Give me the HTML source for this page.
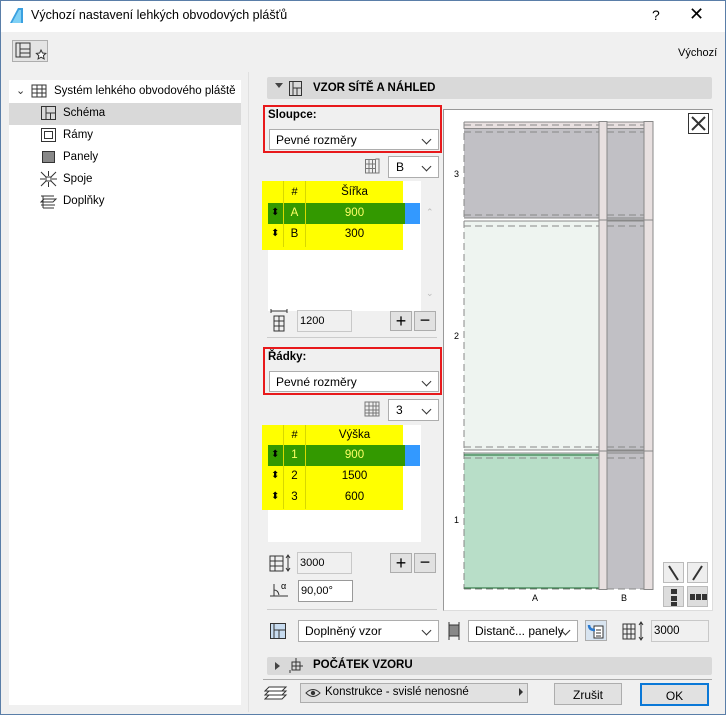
<!DOCTYPE html>
<html><head><meta charset="utf-8"><style>
*{box-sizing:border-box;margin:0;padding:0}
body{width:726px;height:715px;position:relative;overflow:hidden;background:#f0f0f0;font-family:"Liberation Sans","DejaVu Sans",sans-serif;font-size:12px;color:#000}
.a{position:absolute}
.win{position:absolute;left:0;top:0;width:726px;height:715px;border:1px solid #5a7ea8}
.sel{background:#fff;border:1px solid #adadad;height:24px;font-size:12px;padding:4px 6px}
.sel:after{content:"";position:absolute;right:8px;top:6px;width:6px;height:6px;border-right:1px solid #333;border-bottom:1px solid #333;transform:rotate(45deg)}
.inp{background:#fff;border:1px solid #c8c8c8;font-size:11px;padding:4px 2px}
.btn{background:#e1e1e1;border:1px solid #adadad;text-align:center}
.c{text-align:center}
</style></head><body>
<div class="win"></div>
<div class="a" style="left:1px;top:1px;width:724px;height:31px;background:#fff"></div>
<svg class="a" style="left:9px;top:7px" width="15" height="17"><path d="M1 16 L9 1 L14 1 L14 16 Z" fill="#3aa0e0"/><path d="M3 16 L10 3 L12 3 L12 16Z" fill="#7fd0f5"/></svg>
<div class="a" style="left:31px;top:8px;font-size:12.5px">Výchozí nastavení lehkých obvodových plášťů</div>
<div class="a" style="left:652px;top:7px;font-size:14px">?</div>
<div class="a" style="left:689px;top:4px;font-size:18px">✕</div>
<div class="a btn" style="left:12px;top:40px;width:36px;height:22px;background:#e4e4e4"></div>
<svg class="a" style="left:14px;top:41px" width="34" height="20"><rect x="2" y="2" width="14" height="14" fill="none" stroke="#333"/><path d="M6 2V16M6 8H16M6 12H16" stroke="#333" fill="none"/><path d="M27 9l1.5 3 3.3.4-2.4 2.2.7 3.3-3-1.7-3 1.7.7-3.3-2.4-2.2 3.3-.4z" fill="#fff" stroke="#333"/><path d="M36 8l3 3-3 3z" fill="#333"/></svg>
<div class="a" style="left:678px;top:47px;font-size:11px">Výchozí</div>
<div class="a" style="left:9px;top:80px;width:232px;height:625px;background:#fff"></div>
<div class="a" style="left:9px;top:103px;width:232px;height:22px;background:#d9d9d9"></div>
<div class="a" style="left:16px;top:84px;font-size:11px;color:#333">⌄</div>
<svg class="a" style="left:30px;top:83px" width="18" height="16"><path d="M2 2H16V14H2Z M2 6H16M2 10H16M7 2V14M12 2V14" stroke="#333" fill="none"/></svg>
<div class="a" style="left:54px;top:85px;font-size:11.5px">Systém lehkého obvodového pláště</div>
<svg class="a" style="left:40px;top:105px" width="18" height="16"><rect x="1.5" y="1.5" width="14" height="13" fill="none" stroke="#333"/><path d="M6 1.5V14.5M6 8H15.5M10.5 8V14.5" stroke="#333"/></svg>
<div class="a" style="left:63px;top:107px;font-size:11.5px">Schéma</div>
<svg class="a" style="left:40px;top:127px" width="18" height="16"><rect x="1.5" y="1.5" width="14" height="13" fill="none" stroke="#333"/><rect x="4.5" y="4.5" width="8" height="7" fill="none" stroke="#333"/></svg>
<div class="a" style="left:63px;top:129px;font-size:11.5px">Rámy</div>
<svg class="a" style="left:40px;top:149px" width="18" height="16"><rect x="2.5" y="2.5" width="12" height="11" fill="#888" stroke="#333"/></svg>
<div class="a" style="left:63px;top:151px;font-size:11.5px">Panely</div>
<svg class="a" style="left:40px;top:171px" width="18" height="16"><path d="M1 1L7 7M16 1L10 7M1 15L7 9M16 15L10 9M8.5 0V5M8.5 11V16M0 8H5M12 8H17" stroke="#333"/><rect x="6" y="6" width="5" height="4" fill="#fff" stroke="#333"/></svg>
<div class="a" style="left:63px;top:173px;font-size:11.5px">Spoje</div>
<svg class="a" style="left:40px;top:193px" width="18" height="16"><path d="M1 3H14M4 6H16L13 9H1ZM1 12H15M3 15H14M3 3V15" stroke="#333" fill="none"/></svg>
<div class="a" style="left:63px;top:195px;font-size:11.5px">Doplňky</div>
<div class="a" style="left:248px;top:72px;width:1px;height:640px;background:#e0e0e0"></div>
<div class="a" style="left:267px;top:77px;width:445px;height:22px;background:#d9d9d9;border-radius:2px"></div>
<div class="a" style="left:275px;top:83px;width:0;height:0;border-left:4px solid transparent;border-right:4px solid transparent;border-top:5px solid #444"></div>
<svg class="a" style="left:288px;top:80px" width="16" height="17"><rect x="1.5" y="1.5" width="12" height="14" fill="none" stroke="#333"/><path d="M5 1.5V15.5M5 8H13.5M9 8V15.5" stroke="#333"/></svg>
<div class="a" style="left:313px;top:82px;font-weight:bold;font-size:11.5px">VZOR SÍTĚ A NÁHLED</div>
<div class="a" style="left:263px;top:105px;width:179px;height:48px;border:2px solid #e8191b"></div>
<div class="a" style="left:268px;top:109px;font-weight:bold;font-size:11.5px">Sloupce:</div>
<div class="a sel" style="left:269px;top:129px;width:170px;height:21px;padding:3px 6px">Pevné rozměry</div>
<svg class="a" style="left:364px;top:158px" width="16" height="16"><path d="M1 1.5H11M1 6H11M1 10.5H11M1 15H11M1.5 1V15M5 1V15M8.5 1V15M11.5 1V15H15V1H11.5" stroke="#777" fill="none"/></svg>
<div class="a sel" style="left:388px;top:156px;width:51px;height:22px;padding:3px 7px">B</div>
<div class="a" style="left:268px;top:181px;width:153px;height:130px;background:#fff"></div>
<div class="a" style="left:262px;top:181px;width:141px;height:69px;background:#ffff00"></div>
<div class="a" style="left:268px;top:203px;width:137px;height:21px;background:#339900"></div>
<div class="a" style="left:405px;top:203px;width:15px;height:21px;background:#3399ff"></div>
<div class="a" style="left:283px;top:181px;width:1px;height:66px;background:#d8d800"></div>
<div class="a" style="left:305px;top:181px;width:1px;height:66px;background:#d8d800"></div>
<div class="a c" style="left:284px;top:186px;width:21px;font-size:11px">#</div>
<div class="a c" style="left:306px;top:186px;width:97px;font-size:11.5px">Šířka</div>
<div class="a" style="left:271px;top:207px;font-size:10px">⬍</div>
<div class="a c" style="left:284px;top:207px;width:21px;color:#ffff66;font-size:11.5px">A</div>
<div class="a c" style="left:306px;top:207px;width:97px;color:#ffff66;font-size:11.5px">900</div>
<div class="a" style="left:271px;top:228px;font-size:10px">⬍</div>
<div class="a c" style="left:284px;top:228px;width:21px;font-size:11.5px">B</div>
<div class="a c" style="left:306px;top:228px;width:97px;font-size:11.5px">300</div>
<div class="a" style="left:426px;top:207px;font-size:9px;color:#bbb">⌃</div>
<div class="a" style="left:426px;top:288px;font-size:9px;color:#bbb">⌄</div>
<svg class="a" style="left:270px;top:308px" width="18" height="24"><path d="M1 3H17M1 1V5M17 1V5M4 8H14V23H4ZM4 13H14M4 18H14M9 8V23" stroke="#333" fill="none"/></svg>
<div class="a inp" style="left:297px;top:310px;width:55px;height:22px;background:#f0f0f0">1200</div>
<div class="a btn" style="left:390px;top:311px;width:22px;height:20px;font-size:18px;line-height:18px">+</div>
<div class="a btn" style="left:414px;top:311px;width:22px;height:20px;font-size:18px;line-height:16px">−</div>
<div class="a" style="left:267px;top:337px;width:170px;height:1px;background:#ccc"></div>
<div class="a" style="left:263px;top:347px;width:179px;height:48px;border:2px solid #e8191b"></div>
<div class="a" style="left:268px;top:351px;font-weight:bold;font-size:11.5px">Řádky:</div>
<div class="a sel" style="left:269px;top:371px;width:170px;height:21px;padding:3px 6px">Pevné rozměry</div>
<svg class="a" style="left:364px;top:401px" width="16" height="16"><path d="M1 1H15V15H1ZM1 5H15M1 9H15M1 12H15M5 1V15M9 1V15M12 1V15" stroke="#777" fill="none"/></svg>
<div class="a sel" style="left:388px;top:399px;width:51px;height:22px;padding:3px 7px">3</div>
<div class="a" style="left:268px;top:425px;width:153px;height:117px;background:#fff"></div>
<div class="a" style="left:262px;top:425px;width:141px;height:85px;background:#ffff00"></div>
<div class="a" style="left:268px;top:445px;width:137px;height:21px;background:#339900"></div>
<div class="a" style="left:405px;top:445px;width:15px;height:21px;background:#3399ff"></div>
<div class="a" style="left:283px;top:425px;width:1px;height:84px;background:#d8d800"></div>
<div class="a" style="left:305px;top:425px;width:1px;height:84px;background:#d8d800"></div>
<div class="a c" style="left:284px;top:429px;width:21px;font-size:11px">#</div>
<div class="a c" style="left:306px;top:429px;width:97px;font-size:11.5px">Výška</div>
<div class="a" style="left:271px;top:449px;font-size:10px">⬍</div>
<div class="a c" style="left:284px;top:449px;width:21px;color:#ffff66;font-size:11.5px">1</div>
<div class="a c" style="left:306px;top:449px;width:97px;color:#ffff66;font-size:11.5px">900</div>
<div class="a" style="left:271px;top:470px;font-size:10px">⬍</div>
<div class="a c" style="left:284px;top:470px;width:21px;font-size:11.5px">2</div>
<div class="a c" style="left:306px;top:470px;width:97px;font-size:11.5px">1500</div>
<div class="a" style="left:271px;top:491px;font-size:10px">⬍</div>
<div class="a c" style="left:284px;top:491px;width:21px;font-size:11.5px">3</div>
<div class="a c" style="left:306px;top:491px;width:97px;font-size:11.5px">600</div>
<svg class="a" style="left:269px;top:554px" width="24" height="18"><path d="M1 2H14V17H1ZM1 7H14M1 12H14M6 2V17M19 2V16M17 4L19 1L21 4M17 14L19 17L21 14" stroke="#333" fill="none"/></svg>
<div class="a inp" style="left:297px;top:552px;width:55px;height:22px;background:#f0f0f0">3000</div>
<div class="a btn" style="left:390px;top:553px;width:22px;height:20px;font-size:18px;line-height:18px">+</div>
<div class="a btn" style="left:414px;top:553px;width:22px;height:20px;font-size:18px;line-height:16px">−</div>
<svg class="a" style="left:268px;top:580px" width="24" height="18"><path d="M2 16H20M6 16V4M6 10Q10 10 11 15" stroke="#333" fill="none"/><text x="13" y="9" font-size="9" font-family="Liberation Sans">α</text></svg>
<div class="a inp" style="left:298px;top:580px;width:55px;height:22px;border-color:#999">90,00°</div>
<div class="a" style="left:267px;top:609px;width:170px;height:1px;background:#ccc"></div>
<div class="a" style="left:443px;top:109px;width:270px;height:502px;background:#fff;border:1px solid #999;border-right-color:#ddd;border-bottom-color:#ddd"></div>
<svg class="a" style="left:444px;top:110px" width="268" height="500">
<g font-family="Liberation Sans" font-size="9">
<text x="10" y="67">3</text><text x="10" y="229">2</text><text x="10" y="413">1</text>
<text x="88" y="491">A</text><text x="177" y="491">B</text></g>
<rect x="20" y="12" width="135" height="96" fill="#c1c0c5"/>
<rect x="20" y="111" width="135" height="229" fill="#eef4f0"/>
<rect x="20" y="343" width="135" height="135" fill="#b8dec8"/>
<rect x="163" y="12" width="37" height="467" fill="#c1c0c5"/>
<rect x="20" y="12" width="180" height="7" fill="#e8e0e0"/>
<path d="M20 12H200M20 18.5H200M20 108H200M20 111H200M20 340H200M20 343H200" stroke="#888" fill="none"/>
<path d="M20 15H200M20 22H200M20 105H200M20 116H200M20 337H200M20 348H200M20 479H200M20 12V479" stroke="#888" stroke-dasharray="7,4" fill="none"/>
<path d="M20 345H155M20 478H155" stroke="#1a6a30"/>
<rect x="155" y="11.5" width="8" height="468" fill="#e8e0e0" stroke="#888"/>
<rect x="200" y="11.5" width="9" height="468" fill="#e8e0e0" stroke="#888"/>
<path d="M155 110H209M155 341H209" stroke="#888"/>
<rect x="244.5" y="3.5" width="20" height="20" fill="#fff" stroke="#333"/>
<path d="M248 7L261 20M261 7L248 20" stroke="#333" stroke-width="2"/>
<g stroke="#bbb"><rect x="219.5" y="452.5" width="20" height="20" fill="#eee"/><rect x="243.5" y="452.5" width="20" height="20" fill="#eee"/><rect x="219.5" y="476.5" width="20" height="20" fill="#ddd"/><rect x="243.5" y="476.5" width="20" height="20" fill="#ddd"/></g>
<path d="M225 456L234 470M258 456L249 470" stroke="#333" stroke-width="2"/>
<path d="M227 479h6v5h-6zM227 486h6v5h-6zM227 492h6v4h-6zM246 484h5v6h-5zM252 484h5v6h-5zM258 484h5v6h-5z" fill="#333"/>
</svg>
<svg class="a" style="left:268px;top:621px" width="20" height="20"><rect x="2.5" y="2.5" width="15" height="15" fill="#c8dcf0" stroke="#333"/><path d="M6 2.5V17.5M6 9H17.5M11 9V17.5" stroke="#333"/></svg>
<div class="a sel" style="left:298px;top:620px;width:141px;height:22px;padding:3px 6px">Doplněný vzor</div>
<svg class="a" style="left:446px;top:621px" width="16" height="20"><rect x="3" y="4" width="10" height="11" fill="#888" stroke="#333"/><path d="M3 1V19M13 1V19" stroke="#333"/></svg>
<div class="a sel" style="left:468px;top:620px;width:110px;height:22px;padding:3px 6px">Distanč... panely</div>
<div class="a btn" style="left:585px;top:620px;width:22px;height:21px;background:#d8e4f0"></div>
<svg class="a" style="left:587px;top:622px" width="18" height="18"><path d="M7 4H16V16H7ZM9 8H14M9 11H14M9 14H14" stroke="#333" fill="#fff"/><path d="M2 3Q2 8 8 8" stroke="#2a7ad0" stroke-width="2.5" fill="none"/></svg>
<svg class="a" style="left:622px;top:621px" width="24" height="20"><path d="M1 3H13V18H1ZM1 8H13M1 13H13M5 3V18M9 3V18M19 2V18M17 4L19 1L21 4M17 16L19 19L21 16" stroke="#333" fill="none"/></svg>
<div class="a inp" style="left:651px;top:620px;width:58px;height:22px;background:#f0f0f0;font-size:11.5px">3000</div>
<div class="a" style="left:267px;top:657px;width:445px;height:18px;background:#d9d9d9;border-radius:2px"></div>
<div class="a" style="left:275px;top:662px;width:0;height:0;border-top:4px solid transparent;border-bottom:4px solid transparent;border-left:5px solid #444"></div>
<svg class="a" style="left:288px;top:657px" width="16" height="17"><path d="M4 5H12V13H4ZM4 9H12M8 5V13M8 1V5M2 13V16M12 9H15" stroke="#333" fill="none"/></svg>
<div class="a" style="left:313px;top:659px;font-weight:bold;font-size:11.5px">POČÁTEK VZORU</div>
<div class="a" style="left:263px;top:679px;width:449px;height:1px;background:#aaa"></div>
<svg class="a" style="left:264px;top:684px" width="24" height="20"><path d="M5 3H22L18 7H1ZM5 7H22L18 11H1ZM5 11H22L18 15H1Z" stroke="#333" fill="#fff"/></svg>
<div class="a btn" style="left:300px;top:683px;width:228px;height:20px;font-size:11.5px;text-align:left;padding:2px 0 0 24px">Konstrukce - svislé nenosné</div>
<svg class="a" style="left:305px;top:687px" width="16" height="12"><path d="M1 6Q8 -1 15 6Q8 13 1 6Z" fill="none" stroke="#333"/><circle cx="8" cy="6" r="2.2" fill="#333"/></svg>
<div class="a" style="left:519px;top:688px;border-top:4px solid transparent;border-bottom:4px solid transparent;border-left:4px solid #333"></div>
<div class="a btn" style="left:554px;top:683px;width:68px;height:22px;font-size:12px;padding-top:4px">Zrušit</div>
<div class="a btn" style="left:640px;top:683px;width:69px;height:23px;border:2px solid #0a78d7;font-size:12px;padding-top:4px">OK</div>
</body></html>
